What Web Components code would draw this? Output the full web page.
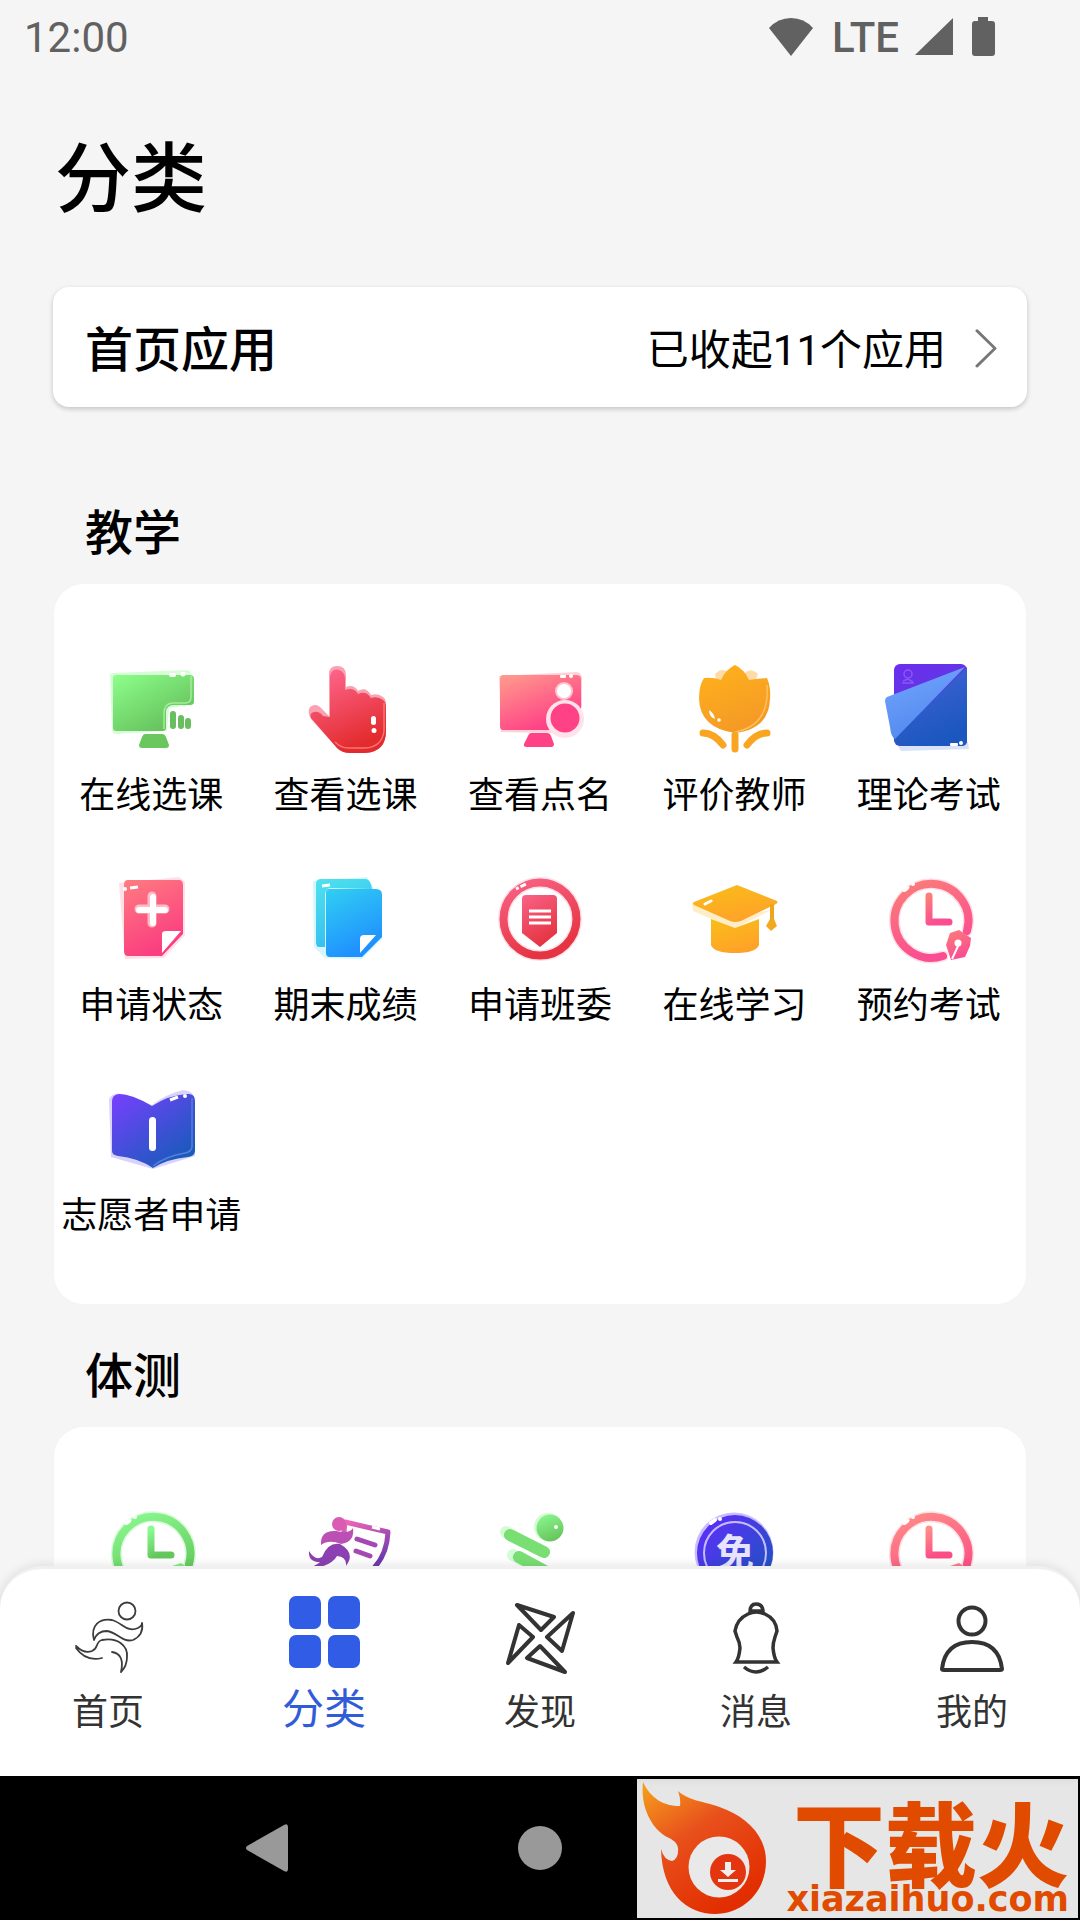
<!DOCTYPE html>
<html lang="zh-CN">
<head>
<meta charset="utf-8">
<meta name="viewport" content="width=device-width, initial-scale=1">
<title>分类</title>
<style>
  html, body { margin: 0; height: 100%; background: #f5f5f5; }
  body { font-family: Roboto, "Noto Sans CJK SC", sans-serif; color: #000; }
</style>
</head>
<body>
<category-app></category-app>
<script>
const gradient = (id, a, b, x2 = 0.4) =>
  `<linearGradient id="${id}" x1="0" y1="0" x2="${x2}" y2="1"><stop offset="0" stop-color="${a}"/><stop offset="1" stop-color="${b}"/></linearGradient>`;

const clock = (a, b, halo) => `<defs>${gradient('g', a, b)}</defs>
  <g fill="none" stroke-linecap="round" stroke-linejoin="round">
    <path d="M88 62A37 37 0 1 0 64 87" stroke="${halo}" stroke-width="11"/>
    <path d="M88 62A37 37 0 1 0 64 87" stroke="url(#g)" stroke-width="8"/>
    <path d="M50 27V53H70" stroke="url(#g)" stroke-width="7"/>
  </g>
  <path d="M71 64L80 61L92 69L91 77L86 88L72 91L67 76Z" fill="url(#g)"/>
  <path d="M80 75L73 90" stroke="#fff" stroke-width="2"/><circle cx="79" cy="74" r="3.5" fill="#fff"/>
  <g fill="#fff"><ellipse cx="27" cy="20" rx="4" ry="2" transform="rotate(-38 27 20)"/><circle cx="34" cy="15" r="2"/></g>`;

const icons = {
  monitor: `<defs>${gradient('g', '#8dff8b', '#62bb58', 0.8)}</defs>
    <path d="M9 17Q9 14 13 14L86 11Q90 11 91 18V46L68 49L66 72L15 75Q11 75 11 70Z" fill="#d8fbd8"/>
    <path d="M15 16H89Q93 16 93 20V43Q93 46 89 46H73Q65 46 65 54V69Q65 72 61 72H15Q12 72 12 69V19Q12 16 15 16Z" fill="url(#g)"/>
    <path d="M90 17V38Q90 44 84 44H71Q63 45 63 54V70" fill="none" stroke="#a5ec9c" stroke-width="1.5"/>
    <path d="M44 75H61Q64 75 65 78L68 86Q68 89 65 89H41Q38 89 38 86L41 78Q42 75 44 75Z" fill="#69c75e"/>
    <g fill="#69be60"><rect x="69" y="52" width="6" height="18" rx="3"/><rect x="77" y="56" width="6" height="14" rx="3"/><rect x="84" y="59" width="6" height="11" rx="3"/></g>
    <rect x="68" y="14" width="7" height="4" rx="2" fill="#fff"/><circle cx="82" cy="15" r="2.5" fill="#fff"/>`,
  hand: `<defs>${gradient('g', '#ff6b94', '#e32b2e')}</defs>
    <path d="M33 57V15Q33 7 41 7Q50 7 50 16V28Q58 25 62 32Q70 27 75 36Q82 34 87 38Q90 40 90 45V72Q90 93 69 94H54Q46 94 41 89L15 60Q11 53 14 48Q20 43 26 50Z" fill="#f9a2b2"/>
    <path d="M34 58V17Q36 9 43 11Q49 13 49 20V31Q58 28 62 35Q70 31 75 39Q82 37 87 41Q90 43 90 48V72Q90 93 69 94H54Q46 94 41 89L15 59Q13 54 18 53Q23 52 27 57Z" fill="url(#g)"/>
    <path d="M88 44V72Q86 88 69 89H52Q45 89 39 83" fill="none" stroke="#f67576" stroke-width="1.5"/>
    <rect x="75" y="57" width="5" height="9" rx="2.5" fill="#fff"/><circle cx="78" cy="71.500" r="2.5" fill="#fff"/>`,
  rollcall: `<defs>${gradient('g', '#ff9d8c', '#ff3b86', 0.6)}</defs>
    <path d="M9 17L87 13Q92 14 92 20V48L67 74L11 73Z" fill="#ffd2d9"/>
    <path d="M13 16H86Q91 16 91 20V50L59 71H13Q10 71 10 67V20Q10 16 13 16Z" fill="url(#g)"/>
    <circle cx="75" cy="60" r="19" fill="#ffe2ea"/><circle cx="75" cy="59" r="14.500" fill="#ff4285"/>
    <circle cx="74" cy="32" r="9" fill="#ffc4d0"/><circle cx="74" cy="32" r="7" fill="#fff"/>
    <path d="M41 74H57Q60 74 61 77L64 85Q64 88 61 88H37Q33 88 34 85L38 77Q39 74 41 74Z" fill="#ff4285"/>
    <rect x="70" y="16" width="6" height="3" rx="1" fill="#fff"/><circle cx="81" cy="17" r="2" fill="#fff"/>`,
  flower: `<defs>${gradient('g', '#ffb31b', '#f59a26')}</defs>
    <path d="M31 15Q38 8 43 13L51 28L61 14Q66 8 74 15L68 30H34Z" fill="#ffdba5"/>
    <path d="M51 6Q60 10 65 21Q72 20 83 19Q87 28 86 40Q85 70 51 74Q16 69 15 40Q15 26 20 19Q29 18 37 21Q42 10 51 6Z" fill="url(#g)"/>
    <path d="M83 26Q86 67 51 73" fill="none" stroke="#ffc15b" stroke-width="1.5"/>
    <path d="M51 76V90M19 74Q30 74 39 86M83 74Q72 74 63 86" fill="none" stroke="#f9a522" stroke-width="7" stroke-linecap="round"/>
    <path d="M25 51Q25 58 31 60Q30 54 25 51Z" fill="#fff"/><circle cx="35" cy="61" r="1.8" fill="#fff"/>`,
  exam: `<defs>${gradient('g', '#6d2cef', '#5143d8')}${gradient('b', '#4664d8', '#1c57bf')}${gradient('l', '#75a6ff', '#5189ee')}</defs>
    <path d="M14 79L89 83L90 90L22 92Z" fill="#d8e2f8"/>
    <rect x="15" y="5" width="73" height="82" rx="6" fill="url(#g)"/>
    <path d="M88 8V82Q88 87 82 87H24Q16 87 15 80Z" fill="url(#b)"/>
    <path d="M8 38L86 8L16 80Q12 78 11 68L6 42Q6 39 8 38Z" fill="url(#l)"/>
    <g fill="none" stroke="#8b57f4" stroke-width="1.5"><circle cx="29" cy="15" r="4"/><path d="M24 22L29 20L34 23M23 24H35"/></g>
    <rect x="71" y="84" width="8" height="3" rx="1" fill="#fff"/><circle cx="82" cy="84" r="2" fill="#fff"/>`,
  apply: `<defs>${gradient('g', '#ff7c80', '#fa3e80')}</defs>
    <path d="M18 14L78 8L84 13V66L63 89L24 90Z" fill="#ffe0e6"/>
    <path d="M27 11H78Q82 11 82 16V65L61 87H27Q23 87 23 82V16Q23 11 27 11Z" fill="url(#g)"/>
    <path d="M61 84V65Q61 62 65 62H80Z" fill="#fff"/>
    <path d="M51 27V54M38 40H64" stroke="#ffbac5" stroke-width="9" stroke-linecap="round"/>
    <path d="M52 28V54M38 41H64" stroke="#fff" stroke-width="6" stroke-linecap="round"/>
    <path d="M29 19L37 18" stroke="#fff" stroke-width="3"/><circle cx="24" cy="20" r="2" fill="#fff"/>`,
  grades: `<defs>${gradient('g', '#31cff2', '#1f90ff')}${gradient('k', '#4ee2ee', '#35bdf0')}</defs>
    <path d="M17 12L71 8L78 20L86 22V70L66 90L29 89L18 78Z" fill="#d5f6fc"/>
    <path d="M25 10H70Q75 11 76 20L34 19Q29 20 29 26V78H23Q20 78 20 73V15Q20 10 25 10Z" fill="url(#k)"/>
    <path d="M33 20H80Q86 20 86 26V68L66 88H34Q30 88 30 84V24Q30 20 33 20Z" fill="url(#g)"/>
    <path d="M64 84V70Q64 66 68 66H80Z" fill="#fff"/>
    <path d="M26 17L34 16" stroke="#fff" stroke-width="3"/>`,
  committee: `<defs>${gradient('g', '#f96386', '#e53543')}</defs>
    <circle cx="50" cy="50" r="36.500" fill="none" stroke="#ffdfe4" stroke-width="11"/>
    <circle cx="50" cy="50" r="36.500" fill="none" stroke="url(#g)" stroke-width="8"/>
    <path d="M36 26H63Q67 26 67 30V64L50 78L32 64V30Q32 26 36 26Z" fill="url(#g)"/>
    <path d="M39 42H61M39 48H61M39 54H61" stroke="#fff" stroke-width="3"/>
    <path d="M26 20L36 15" stroke="#fff" stroke-width="3" stroke-dasharray="3 2 6"/>`,
  cap: `<defs>${gradient('g', '#f9be18', '#ffa328')}</defs>
    <path d="M8 34L9 42L50 60L87 41L51 48Z" fill="#fdeec8"/>
    <path d="M27 50L51 59L75 50V76Q72 84 51 84Q30 84 27 76Z" fill="url(#g)"/>
    <path d="M53 16L93 32Q94 34 92 35L57 52Q51 54 46 52L10 36Q8 34 10 33Z" fill="url(#g)"/>
    <path d="M88 35V52" stroke="#eda51c" stroke-width="4"/><path d="M86 50H90L93 57L87 62L82 57Z" fill="#f1aa20"/>
    <path d="M21 35L27 32" stroke="#fff" stroke-width="3" stroke-linecap="round"/>`,
  booking: clock('#fb7e78', '#fb4d92', '#ffe0e7'),
  book: `<defs>${gradient('g', '#793fff', '#155cb8', 0.8)}</defs>
    <path d="M8 20Q12 13 22 15L51 26Q65 15 82 11Q92 12 93 18L94 77L52 90L10 78Z" fill="#d9d3fc"/>
    <path d="M18 15Q31 15 51 27Q68 16 86 15Q94 14 94 22V72Q94 77 87 78Q66 80 52 89Q37 79 17 77Q11 76 11 72V22Q11 16 18 15Z" fill="url(#g)"/>
    <path d="M91 19V68Q90 73 84 74Q65 77 52 87" fill="none" stroke="#557fd9" stroke-width="1.5"/>
    <rect x="48" y="38" width="7" height="34" rx="3.500" fill="#fff"/>
    <path d="M69 21L77 18" stroke="#fff" stroke-width="3"/><circle cx="84" cy="17" r="2" fill="#fff"/>`,
  clockGreen: clock('#8bfa91', '#63c75a', '#d8fbd9'),
  runCard: `<defs>${gradient('g', '#f066b7', '#6e3aad')}</defs>
    <g fill="none" stroke="url(#g)" stroke-width="5" stroke-linecap="round" stroke-linejoin="round">
      <path d="M48 30L49 20L92 30Q91 52 78 66"/><path d="M61 37L79 43M60 49L74 54" stroke="#a449b4"/></g>
    <circle cx="43" cy="22" r="7" fill="#d95bb4"/>
    <path d="M25 43Q24 28 40 29Q54 32 57 26Q59 40 45 42Q33 37 25 43Z" fill="#bb50b4"/>
    <path d="M13 49Q19 59 26 55Q32 40 44 42Q60 51 50 64Q51 55 41 54Q34 66 9 67Q20 64 24 60Q12 60 13 49Z" fill="#8c40b1"/>
    <path d="M76 25L84 27" stroke="#fff" stroke-width="3"/>`,
  stretch: `<defs>${gradient('g', '#8df990', '#68c85f')}</defs>
    <g stroke-linecap="round" fill="none"><path d="M16 30L51 49M23 53L60 73" stroke="#d5fbd6" stroke-width="12"/>
    <path d="M20 33L54 50M29 55L64 74" stroke="#79df73" stroke-width="12"/></g>
    <circle cx="58" cy="25" r="14" fill="#d5fbd6"/><circle cx="60" cy="26" r="13.500" fill="url(#g)"/><circle cx="66" cy="25" r="2" fill="#fff"/>`,
  exempt: `<defs>${gradient('g', '#652aff', '#1459b8', 1)}</defs>
    <circle cx="50" cy="50" r="39.500" fill="#cbbcff"/><circle cx="51" cy="51" r="38" fill="url(#g)"/>
    <circle cx="51" cy="51" r="31" fill="none" stroke="#c4bcff" stroke-width="2"/>
    <text x="51" y="64" text-anchor="middle" font-family="Noto Sans CJK SC, sans-serif" font-weight="700" font-size="38" fill="#e6e4ff">免</text>
    <path d="M27 21L31 18" stroke="#fff" stroke-width="4" stroke-linecap="round"/><circle cx="36" cy="17" r="2" fill="#fff"/>`,
  clockPink: clock('#ff8d87', '#fb4d86', '#ffe1e5'),
};

const navIcons = {
  home: `<g fill="none" stroke="#3c3c3c" stroke-width="1.8" stroke-linecap="round" stroke-linejoin="round"><circle cx="61" cy="19" r="8.500"/>
    <path d="M28 48C24 33 34 26 46 28C57 31 61 41 72 36Q76 34 76 31Q78 43 67 48C56 51 51 40 41 39Q31 39 28 48Z"/>
    <path d="M10 54Q18 62 26 59C33 56 29 50 36 48C52 45 62 54 61 65Q61 74 55 80Q59 62 46 60M10 56Q20 70 36 66"/></g>`,
  grid: `<g fill="#315ce6"><rect x="7" y="4" width="32" height="33" rx="7"/><rect x="46" y="4" width="32" height="33" rx="7"/><rect x="7" y="43" width="32" height="33" rx="7"/><rect x="46" y="43" width="32" height="33" rx="7"/></g>`,
  discover: `<path d="M19 13L56 25L43 38ZM21 33L35 45L10 71ZM42 54L29 66L67 80ZM75 21L49 45L64 59Z" fill="none" stroke="#333" stroke-width="4" stroke-linejoin="round"/>`,
  bell: `<path d="M36 20Q36 12 42 12Q49 12 49 20M34 22Q42 18 51 22Q62 27 63 39L61 45Q59 51 59 56Q60 66 63 70H22Q25 66 26 56Q26 51 23 45L21 39Q23 27 34 22ZM37 19H48M30 75Q42 85 54 75" fill="none" stroke="#333" stroke-width="3.5"/>`,
  user: `<g fill="none" stroke="#333" stroke-width="4" stroke-linejoin="round"><circle cx="42" cy="29" r="13.500"/><path d="M12 77Q15 50 42 50Q69 50 72 77Q72 78 70 78H14Q12 78 12 77Z"/></g>`,
};

class BaseElement extends HTMLElement {
  constructor() { super(); this.attachShadow({ mode: 'open' }); }
  connectedCallback() { this.shadowRoot.innerHTML = `<style>${this.css()}</style>${this.html()}`; }
}

customElements.define('status-bar', class extends BaseElement {
  css() { return `
    :host { display: flex; justify-content: space-between; align-items: center; flex: none; height: 76px; padding: 0 81px 0 24px; color: #616161; font-size: 42px; line-height: 50px; }
    .signals { display: flex; align-items: center; gap: 16px; font-weight: 500; }
    svg { display: block; fill: #616161; }`; }
  html() { return `<span>12:00</span>
    <div class="signals">
      <svg width="50" height="42" viewBox="0 0 50 42" aria-hidden="true"><path d="M25 39L3 11Q12 1 25 1Q38 1 47 11Z"/></svg>
      <span>LTE</span>
      <svg width="38" height="42" viewBox="0 0 38 42" aria-hidden="true"><path d="M38 1V38H0Z"/></svg>
      <svg width="30" height="42" viewBox="0 0 30 42" aria-hidden="true"><path d="M9 0H19V4H23Q26 4 26 7V36Q26 39 23 39H6Q3 39 3 36V7Q3 4 6 4H9Z"/></svg>
    </div>`; }
});

customElements.define('home-apps-card', class extends BaseElement {
  css() { return `
    :host { display: block; margin-bottom: 54px; }
    button { display: flex; align-items: center; width: 100%; height: 120px; padding: 0 29px 0 32px; border: 0; border-radius: 16px; background: #fff; box-shadow: 0 2px 5px rgba(0,0,0,.2); font: inherit; color: inherit; text-align: left; }
    .title, .note { padding-top: 8px; line-height: 60px; }
    .title { flex: 1; font-size: 48px; font-weight: 500; }
    .note { font-size: 42px; margin-right: 28px; }
    svg { display: block; }`; }
  html() { return `<button type="button"><span class="title"><slot></slot></span><span class="note"><slot name="note"></slot></span>
    <svg width="24" height="42" viewBox="0 0 24 42" fill="none" stroke="#777" stroke-width="3" stroke-linecap="round" stroke-linejoin="round" aria-hidden="true"><path d="M3 4L21 23L3 42" transform="translate(0 1) scale(1 .93)"/></svg></button>`; }
});

customElements.define('app-tile', class extends BaseElement {
  css() { return `
    :host { display: block; height: 210px; }
    a { display: flex; flex-direction: column; align-items: center; gap: 12px; padding-top: 30px; color: #000; text-decoration: none; white-space: nowrap; font-size: 36px; line-height: 50px; }
    svg { display: block; }`; }
  html() { return `<a href="#"><svg width="100" height="100" viewBox="0 0 100 100" aria-hidden="true">${icons[this.getAttribute('icon')]}</svg><slot></slot></a>`; }
});

customElements.define('app-section', class extends BaseElement {
  css() { return `
    :host { display: block; padding-top: 43px; }
    h2 { margin: 0 0 20px; padding-left: 32px; font-size: 48px; line-height: 60px; font-weight: 500; }
    .grid { display: grid; grid-template-columns: repeat(5, minmax(0, 1fr)); padding: 45px 0; margin: 0 1px; border-radius: 30px; background: #fff; }`; }
  html() { return `<h2>${this.getAttribute('heading')}</h2><div class="grid"><slot></slot></div>`; }
});

customElements.define('nav-tab', class extends BaseElement {
  css() { return `
    :host { display: block; flex: 1; }
    a { display: flex; flex-direction: column; align-items: center; gap: 12px; color: #333; text-decoration: none; font-size: 36px; line-height: 50px; }
    a[aria-current] { color: #315cd8; font-size: 42px; line-height: 44px; }
    svg { display: block; }`; }
  html() { return `<a href="#" ${this.hasAttribute('selected') ? 'aria-current="page"' : ''}><svg width="84" height="84" viewBox="0 0 84 84" aria-hidden="true">${navIcons[this.getAttribute('icon')]}</svg><slot></slot></a>`; }
});

customElements.define('tab-bar', class extends BaseElement {
  css() { return `
    :host { display: block; flex: none; position: relative; z-index: 1; }
    nav { display: flex; box-sizing: border-box; height: 210px; padding-top: 23px; border-top: 3px solid #f0f0f0; border-radius: 42px 42px 0 0; background: #fff; box-shadow: 0 0 12px rgba(0,0,0,.12); }`; }
  html() { return `<nav><slot></slot></nav>`; }
});

customElements.define('site-badge', class extends BaseElement {
  css() { return `
    :host { display: flex; box-sizing: border-box; width: 441px; height: 139px; background: #e6e6e6; color: #e04b00; }
    svg { display: block; flex: none; }
    .names { display: flex; flex-direction: column; align-items: flex-end; flex: 1; padding: 18px 9px 0 0; }
    .cn { font-family: "Noto Sans CJK SC", sans-serif; font-size: 92px; line-height: 85px; font-weight: 900; white-space: nowrap; }
    .en { font-family: "DejaVu Sans", sans-serif; font-size: 35px; line-height: 34px; font-weight: 700; }`; }
  html() { return `<svg width="131" height="139" viewBox="0 0 131 139" aria-hidden="true">
      <defs><linearGradient id="f" x1="0" y1="0" x2=".6" y2="1"><stop offset="0" stop-color="#f7a21c"/><stop offset=".45" stop-color="#e8501c"/><stop offset="1" stop-color="#e22d00"/></linearGradient></defs>
      <path d="M6 3C14 20 27 27 43 27Q44 20 41 12C53 23 70 22 90 31C113 41 129 59 129 82C129 113 106 135 78 135C50 135 25 114 24 70Q27 81 35 82Q42 80 41 69Q40 62 30 58C15 50 3 28 6 3Z" fill="url(#f)"/>
      <circle cx="82" cy="88" r="30.500" fill="#e9e9e9"/><circle cx="91" cy="93" r="18" fill="#e33510"/>
      <path d="M88 83H94V91H99L91 98L83 91H88ZM81 100H101V103H81Z" fill="#eee"/></svg>
    <div class="names"><span class="cn">下载火</span><span class="en">xiazaihuo.com</span></div>`; }
});

customElements.define('system-bar', class extends BaseElement {
  css() { return `
    :host { display: flex; flex: none; position: relative; height: 144px; background: #000; align-items: center; justify-content: center; gap: 222px; }
    button { border: 0; padding: 0; background: none; width: 48px; height: 50px; }
    svg { display: block; fill: #999; }
    site-badge { position: absolute; right: 2px; top: 3px; }`; }
  html() { return `
    <button type="button" aria-label="返回"><svg width="48" height="50" viewBox="0 0 48 50"><path d="M38 2Q42 0 42 4V46Q42 50 38 48L1 27Q-1 25 1 23Z"/></svg></button>
    <button type="button" aria-label="主屏幕"><svg width="48" height="50" viewBox="0 0 48 50"><circle cx="24" cy="25" r="22"/></svg></button>
    <button type="button" aria-label="最近任务"><svg width="48" height="50" viewBox="0 0 48 50"><rect x="1" y="2" width="46" height="46" rx="4"/></svg></button>
    <site-badge></site-badge>`; }
});

customElements.define('category-app', class extends BaseElement {
  css() { return `
    :host { display: flex; flex-direction: column; height: 100vh; background: #f5f5f5; }
    main { flex: 1; min-height: 0; overflow: hidden; padding: 54px 53px 0; }
    h1 { margin: 0 0 57px; padding-left: 2px; font-size: 76px; line-height: 100px; font-weight: 500; }`; }
  html() {
    const tiles = list => list.map(([icon, label]) => `<app-tile icon="${icon}">${label}</app-tile>`).join('');
    return `<status-bar></status-bar>
    <main>
      <h1>分类</h1>
      <home-apps-card>首页应用<span slot="note">已收起11个应用</span></home-apps-card>
      <app-section heading="教学">${tiles([['monitor', '在线选课'], ['hand', '查看选课'], ['rollcall', '查看点名'], ['flower', '评价教师'], ['exam', '理论考试'], ['apply', '申请状态'], ['grades', '期末成绩'], ['committee', '申请班委'], ['cap', '在线学习'], ['booking', '预约考试'], ['book', '志愿者申请']])}</app-section>
      <app-section heading="体测">${tiles([['clockGreen', ''], ['runCard', ''], ['stretch', ''], ['exempt', ''], ['clockPink', '']])}</app-section>
    </main>
    <tab-bar>
      <nav-tab icon="home">首页</nav-tab><nav-tab icon="grid" selected>分类</nav-tab><nav-tab icon="discover">发现</nav-tab><nav-tab icon="bell">消息</nav-tab><nav-tab icon="user">我的</nav-tab>
    </tab-bar>
    <system-bar></system-bar>`;
  }
});
</script>
</body>
</html>
